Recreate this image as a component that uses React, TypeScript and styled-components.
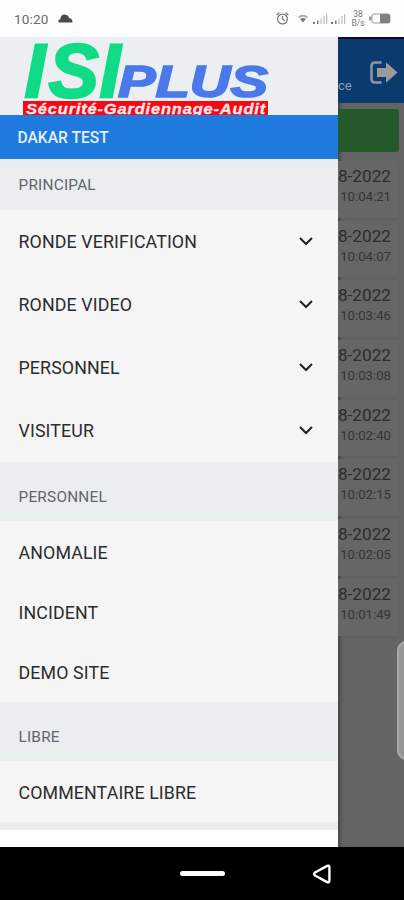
import React from "react";
import styled, { createGlobalStyle } from "styled-components";

const GlobalStyle = createGlobalStyle`
  * { box-sizing: border-box; }
  body { margin: 0; font-family: Roboto, "Liberation Sans", sans-serif; background: #000; }
  svg { display: block; flex: none; }
`;

const Screen = styled.div`
  position: relative;
  display: flex;
  flex-direction: column;
  width: 404px;
  height: 900px;
  overflow: hidden;
`;

const StatusBar = styled.header`
  display: flex;
  align-items: center;
  justify-content: space-between;
  height: 37px;
  padding: 0 13px 0 14px;
  background: #fdfdfd;
  color: #6a6a6a;
`;

const StatusGroup = styled.div<{ $gap: number }>`
  display: flex;
  align-items: center;
  gap: ${(p) => p.$gap}px;
`;

const Clock = styled.span`
  font-size: 13.5px;
  letter-spacing: 0.15px;
  line-height: 16px;
`;

const NetSpeed = styled.div`
  display: flex;
  flex-direction: column;
  align-items: center;
  width: 14px;
  font-size: 8.5px;
  line-height: 9px;
  color: #777;
`;

const Body = styled.div`
  display: flex;
  height: 810px;
`;

const Drawer = styled.nav`
  display: flex;
  flex-direction: column;
  width: 338px;
  background: #fff;
`;

const Brand = styled.div`
  height: 78px;
  overflow: hidden;
  background: #ebeff1;
`;

const User = styled.div`
  height: 44px;
  padding-left: 17.5px;
  line-height: 46px;
  font-size: 15.6px;
  font-weight: 500;
  letter-spacing: 0;
  color: #e4f0fd;
  background: #1f7adf;
`;

const SectionTitle = styled.div<{ $first?: boolean }>`
  height: ${(p) => (p.$first ? 51 : 59)}px;
  padding: ${(p) => (p.$first ? 1 : 11)}px 0 0 18.5px;
  line-height: ${(p) => (p.$first ? 51 : 49)}px;
  font-size: 15.4px;
  letter-spacing: 0.2px;
  color: #62676a;
  background: #eaeeef;
`;

const Item = styled.div<{ $height: number; $top: number }>`
  display: flex;
  align-items: center;
  justify-content: space-between;
  height: ${(p) => p.$height}px;
  padding: ${(p) => p.$top}px 25px 0 18.5px;
  font-size: 17.8px;
  letter-spacing: 0.12px;
  color: #2c2c2c;
  background: #f5f5f5;
`;

const Footer = styled.div`
  height: 8px;
  background: #eaeeef;
`;

const Page = styled.main`
  flex: 1;
  min-width: 0;
  overflow: hidden;
  background: #656565;
  box-shadow: inset 4px 0 4px -2px rgba(0, 0, 0, 0.35);
`;

const AppBar = styled.div`
  display: flex;
  justify-content: space-between;
  height: 66px;
  padding: 22px 6px 0 0;
  border-top: 2px solid #070a3a;
  background: #0b3a6e;
`;

const BarLabel = styled.span`
  padding-top: 17px;
  font-size: 13px;
  line-height: 16px;
  color: #8b9bae;
`;

const Action = styled.div`
  height: 43px;
  margin: 6px 5px 9px 0;
  border-radius: 0 3px 3px 0;
  background: #24592b;
`;

const Entry = styled.div`
  display: flex;
  flex-direction: column;
  align-items: flex-end;
  height: 56.7px;
  margin: 0 6px 3px 0;
  padding: 5px 7px 0 0;
  background: #666;
  box-shadow: 0 1px 2px rgba(0, 0, 0, 0.06);
  white-space: nowrap;
`;

const EntryDate = styled.span`
  font-size: 17.2px;
  line-height: 20px;
  color: #2c2c2c;
`;

const EntryTime = styled.span`
  font-size: 13.2px;
  line-height: 21px;
  color: #343434;
`;

const EdgeHandle = styled.div`
  position: absolute;
  right: -12px;
  top: 641px;
  width: 19px;
  height: 119px;
  border: 2px solid #a9a9a9;
  border-radius: 14px;
  background: #969696;
`;

const SystemNav = styled.footer`
  display: grid;
  grid-template-columns: 180px 45px 1fr;
  align-items: center;
  height: 53px;
  background: #000;
`;

const HomePill = styled.div`
  grid-column: 2;
  height: 5px;
  border-radius: 3px;
  background: #fff;
`;

const BackButton = styled.div`
  padding-left: 87px;
`;

const Logo = () => (
  <svg width="338" height="78" viewBox="0 37 338 78" fontFamily="'Liberation Sans', Arial, sans-serif" fontWeight="bold" fontStyle="italic">
    <text x="24.5 48.5 99.5" y="96.5" fontSize="75.5" fill="#10db86" stroke="#10db86" strokeWidth="2.4">ISI</text>
    <text x="118" y="97" fontSize="43.5" textLength="150" lengthAdjust="spacingAndGlyphs" fill="#4b78ea" stroke="#4b78ea" strokeWidth="1.7">PLUS</text>
    <rect x="23" y="101" width="245" height="14" fill="#fb0713" />
    <text x="26" y="114" fontSize="14.5" letterSpacing="0.7" textLength="240" lengthAdjust="spacingAndGlyphs" fill="#ffe9ec" stroke="#ffe9ec" strokeWidth="0.3">Sécurité-Gardiennage-Audit</text>
  </svg>
);

const Chevron = () => (
  <svg width="14" height="9" viewBox="0 0 14 9" fill="none" stroke="#222" strokeWidth="2">
    <path d="M1 1 L7 7 L13 1" />
  </svg>
);

const CloudIcon = () => (
  <svg width="15" height="9" viewBox="0 0 15 9" fill="#4a4a4a">
    <path d="M1.6 8.5C-.2 8.5 0 5.4 2.3 5.2C2.2 1.7 5.5-.5 8 1C9.8 1 10.8 2.5 11 4.1C13.6 4.4 14.7 6.1 14.4 8.5Z" />
  </svg>
);

const AlarmIcon = () => (
  <svg width="13" height="13" viewBox="0 0 13 13" fill="none" stroke="#777" strokeWidth="1.2">
    <circle cx="6.5" cy="7" r="4.9" />
    <path d="M6.5 4V7L8.8 8.8M.7 3L3.3.8M9.7.8L12.3 3" />
  </svg>
);

const WifiIcon = () => (
  <svg width="10" height="9" viewBox="0 0 10 9">
    <path d="M0 2.5Q5-1 10 2.5L8.8 4Q5 1.5 1.2 4Z" fill="#aaa" />
    <path d="M2 4.8Q5 3 8 4.8L5 8.4Z" fill="#777" />
  </svg>
);

const SignalIcon = () => (
  <svg width="15" height="12" viewBox="0 0 15 12">
    <path d="M0 9H2V11H0ZM4 7.5H5.5V11H4Z" fill="#777" />
    <path d="M7.5 5.5H8.6V11H7.5ZM10.5 3H11.6V11H10.5ZM13 1H14.2V11H13Z" fill="#bbb" />
  </svg>
);

const BatteryIcon = () => (
  <svg width="22" height="11" viewBox="0 0 22 11">
    <path d="M0 3.5H2.5V7.5H0Z" fill="#999" />
    <rect x="3" y="1" width="18" height="9" rx="2" fill="#fff" stroke="#999" />
    <path d="M11 1H19.5Q21 1 21 2.5V8.5Q21 10 19.5 10H11Z" fill="#808080" />
  </svg>
);

const ExitIcon = () => (
  <svg width="28" height="23" viewBox="0 0 28 23">
    <path d="M11.5 1.5H5Q1.5 1.5 1.5 5V18Q1.5 21.5 5 21.5H11.5" fill="none" stroke="#8f969d" strokeWidth="2.5" />
    <path d="M7 7H16V1.2L27.5 11.5L16 21.8V16H7Z" fill="#9a9a98" />
  </svg>
);

const BackIcon = () => (
  <svg width="20" height="20" viewBox="0 0 20 20" fill="none" stroke="#fff" strokeWidth="2.4" strokeLinejoin="round">
    <path d="M15.2 1.9Q17.4 .9 17.4 3.3V16.7Q17.4 19.1 15.2 18.1L3 11.5Q1.2 10 3 8.5Z" />
  </svg>
);

const expandable = ["RONDE VERIFICATION", "RONDE VIDEO", "PERSONNEL", "VISITEUR"];
const personnel = ["ANOMALIE", "INCIDENT", "DEMO SITE"];
const times = ["10:04:21", "10:04:07", "10:03:46", "10:03:08", "10:02:40", "10:02:15", "10:02:05", "10:01:49"];

export default function App() {
  return (
    <Screen>
      <GlobalStyle />
      <StatusBar>
        <StatusGroup $gap={10}>
          <Clock>10:20</Clock>
          <CloudIcon />
        </StatusGroup>
        <StatusGroup $gap={4}>
          <AlarmIcon />
          <StatusGroup $gap={5}>
            <span />
            <WifiIcon />
            <StatusGroup $gap={3}>
              <SignalIcon />
              <SignalIcon />
            </StatusGroup>
            <NetSpeed><span>38</span><span>B/s</span></NetSpeed>
          </StatusGroup>
          <BatteryIcon />
        </StatusGroup>
      </StatusBar>
      <Body>
        <Drawer>
          <Brand><Logo /></Brand>
          <User>DAKAR TEST</User>
          <SectionTitle $first>PRINCIPAL</SectionTitle>
          {expandable.map((label) => (
            <Item key={label} $height={63} $top={0}>{label}<Chevron /></Item>
          ))}
          <SectionTitle>PERSONNEL</SectionTitle>
          {personnel.map((label) => (
            <Item key={label} $height={60.33} $top={2}>{label}</Item>
          ))}
          <SectionTitle>LIBRE</SectionTitle>
          <Item $height={61} $top={2}>COMMENTAIRE LIBRE</Item>
          <Footer />
        </Drawer>
        <Page>
          <AppBar>
            <BarLabel>ce</BarLabel>
            <ExitIcon />
          </AppBar>
          <Action />
          {times.map((time) => (
            <Entry key={time}>
              <EntryDate>8-2022</EntryDate>
              <EntryTime>{time}</EntryTime>
            </Entry>
          ))}
        </Page>
      </Body>
      <SystemNav>
        <HomePill />
        <BackButton><BackIcon /></BackButton>
      </SystemNav>
      <EdgeHandle />
    </Screen>
  );
}
